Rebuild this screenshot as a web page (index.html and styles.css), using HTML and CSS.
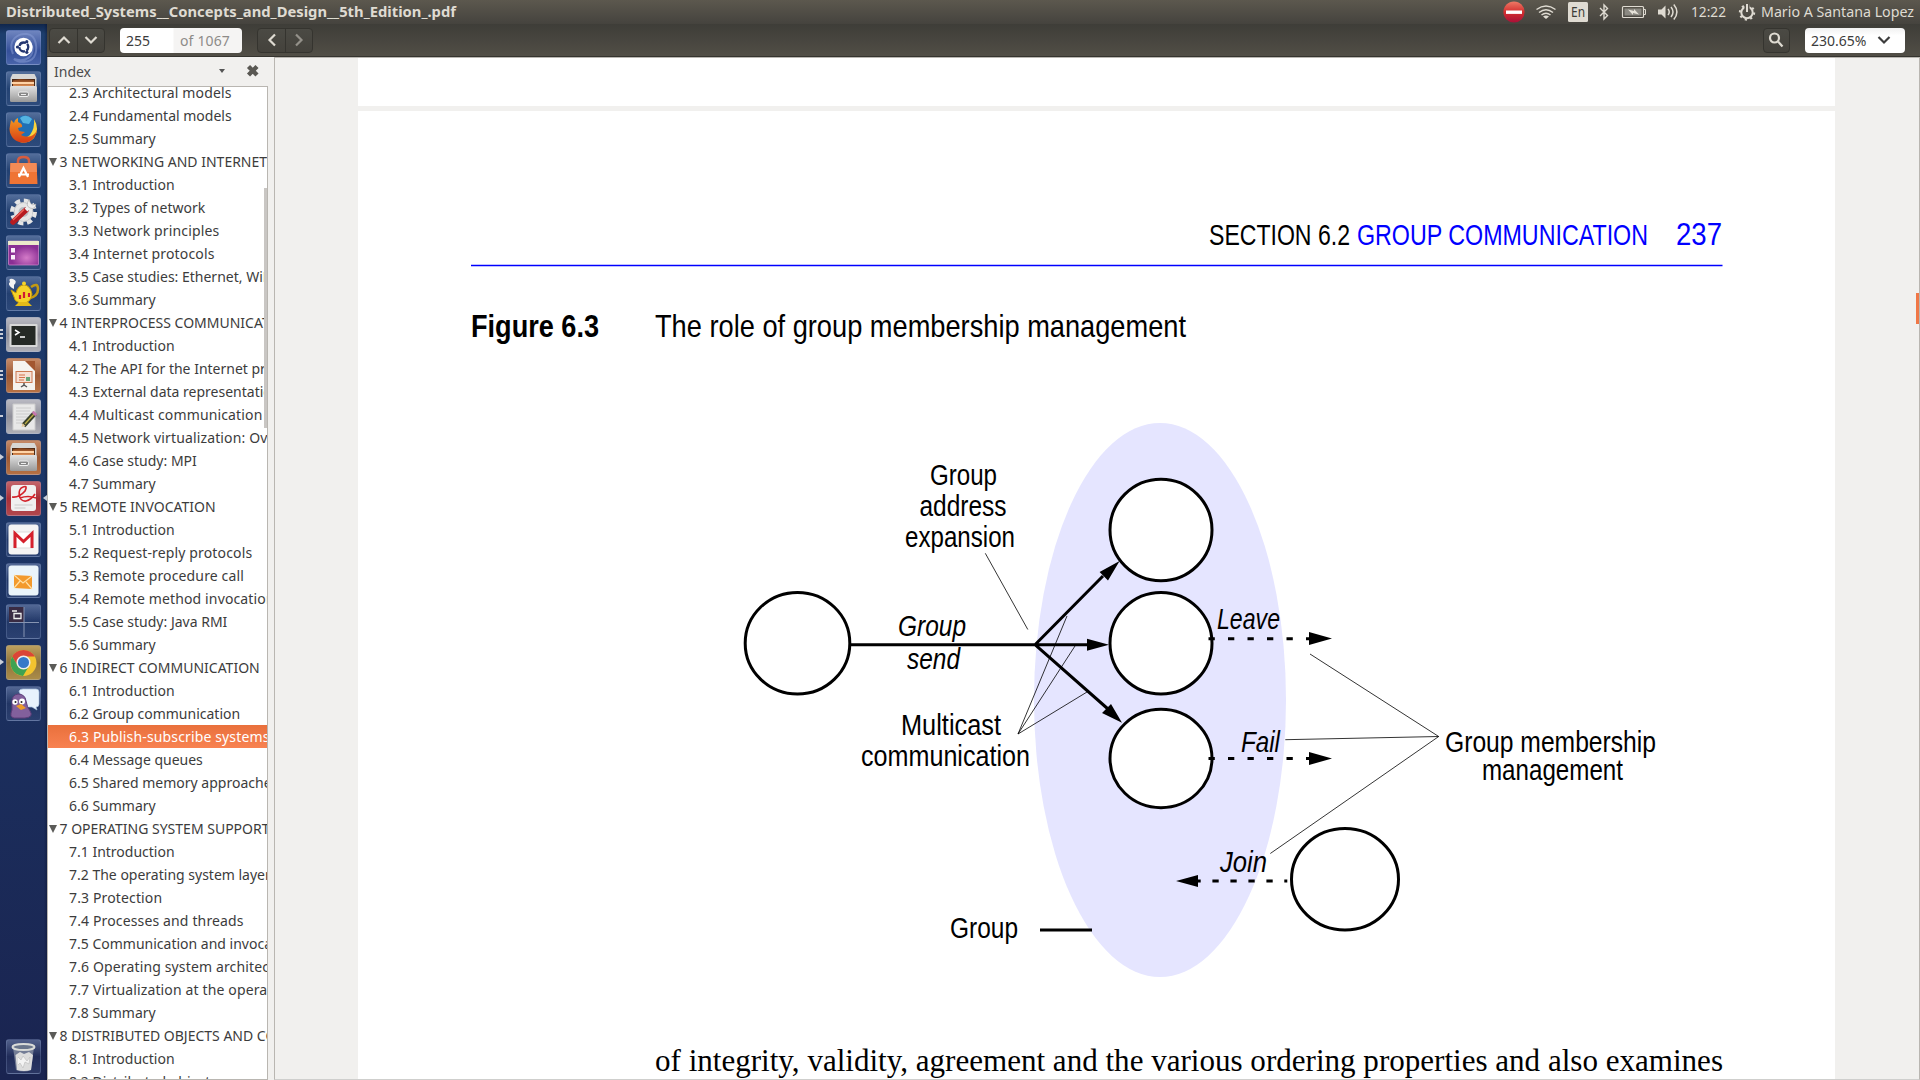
FILE: index.html
```html
<!DOCTYPE html>
<html lang="en">
<head>
<meta charset="utf-8">
<title>Distributed_Systems__Concepts_and_Design__5th_Edition_.pdf</title>
<link rel="stylesheet" href="styles.css">
</head>
<body>
<header class="menubar">
  <svg class="title" width="470" height="24"><text x="6" y="17" textLength="450" lengthAdjust="spacingAndGlyphs">Distributed_Systems__Concepts_and_Design__5th_Edition_.pdf</text></svg>
  <svg class="tray" width="420" height="24" viewBox="1500 0 420 24">
    <defs><linearGradient id="red" x2="0" y2="1"><stop offset="0" stop-color="#ee7a66"/><stop offset=".5" stop-color="#d22f2f"/><stop offset="1" stop-color="#a80f38"/></linearGradient></defs>
    <circle cx="1514" cy="12" r="10.6" fill="url(#red)"/><rect x="1506" y="10.5" width="16" height="3.4" fill="#fff"/>
    <g fill="none" stroke="#dfdbd2" stroke-width="1.5"><path d="M1536.5 9.5Q1546 2.500 1555.500 9.500M1539 12.500Q1546 7 1553 12.500M1541.500 15Q1546 11.500 1550.500 15"/></g><path d="M1543 16.500Q1546 14.500 1549 16.500L1546 19z" fill="#dfdbd2"/>
    <rect x="1568" y="2" width="20" height="20" rx="1.500" fill="#dfdbd2"/><text x="1571" y="17" class="lang" textLength="14" lengthAdjust="spacingAndGlyphs">En</text>
    <path d="M1600 8L1607.500 15.500 1604 19V5L1607.500 8.500 1600 16" fill="none" stroke="#dfdbd2" stroke-width="1.400"/>
    <rect x="1622.500" y="6.500" width="21" height="11" rx="1" fill="none" stroke="#dfdbd2" stroke-width="1.200"/><path d="M1644 9.500h1.500v5h-1.500" fill="none" stroke="#dfdbd2"/><rect x="1624.500" y="8.500" width="17" height="7" fill="#8b8982"/><path d="M1628 9.500l6 1.500v-2l5 5.500-6-1.500v2z" fill="#e6e2d9"/>
    <path d="M1658 9.500h3.500l4-4v13l-4-4h-3.500z" fill="#dfdbd2"/><path d="M1668 9Q1670.500 12 1668 15M1671 7Q1675 12 1671 17M1673.800 4.500Q1680 12 1673.800 19.500" fill="none" stroke="#dfdbd2" stroke-width="1.500"/>
    <text x="1691" y="17" textLength="35" lengthAdjust="spacingAndGlyphs">12:22</text>
    <circle cx="1747" cy="12.500" r="5.700" fill="none" stroke="#dfdbd2" stroke-width="2"/><circle cx="1747" cy="12.500" r="7.200" fill="none" stroke="#dfdbd2" stroke-width="2" stroke-dasharray="2.200 3.455"/><path d="M1744.500 4h5v6h-5z" fill="#54514a"/><path d="M1747 4v8" stroke="#dfdbd2" stroke-width="2"/>
    <text x="1761" y="17" textLength="153" lengthAdjust="spacingAndGlyphs">Mario A Santana Lopez</text>
  </svg>
</header>
<div class="desktop">
<nav class="launcher">
  <svg width="0" height="0" class="defs"><defs>
    <linearGradient id="steel" x2="0" y2="1"><stop offset="0" stop-color="#e2e2e2"/><stop offset="1" stop-color="#999"/></linearGradient>
    <linearGradient id="fold" x2="0" y2="1"><stop offset="0" stop-color="#7b3a14"/><stop offset="1" stop-color="#f6a465"/></linearGradient>
    <radialGradient id="violet" cx=".6" cy=".7"><stop offset="0" stop-color="#d47bc8"/><stop offset="1" stop-color="#8a2f94"/></radialGradient>
    <linearGradient id="fox" x2="0" y2="1"><stop offset="0" stop-color="#f49a22"/><stop offset="1" stop-color="#d63c16"/></linearGradient>
    <symbol id="files" viewBox="0 0 35 35"><path d="M6.500 3h22l2 4v12h-26V7z" fill="#d7d7d5"/><path d="M6 8h23v9H6z" fill="#4a2a18"/><path d="M7 9.500l7-1.500 14 1v8H7z" fill="url(#fold)"/><path d="M6 11h22v2H6z" fill="#ffd3a6"/><rect x="4" y="15" width="27" height="16" rx="1.500" fill="url(#steel)"/><rect x="12.500" y="21" width="10" height="4.500" rx="1.500" fill="#888" stroke="#eee"/><path d="M15 23.500h5" stroke="#eee"/></symbol>
  </defs></svg>
  <div class="tile dash"><svg viewBox="0 0 35 35"><path d="M7 24C1 10 12 3 21 4 31 5 32 20 28 27 24 33 12 33 8 29 20 33 29 26 26 15" fill="none" stroke="#8ba0d8" stroke-width="2" opacity=".5"/><circle cx="17.500" cy="17" r="9.200" fill="#fff"/><circle cx="17.800" cy="17" r="4.500" fill="none" stroke="#23356f" stroke-width="2.300" stroke-dasharray="8.200 1.200" stroke-dashoffset="4"/><g fill="#23356f"><circle cx="11.500" cy="17" r="1.600"/><circle cx="20.800" cy="11.700" r="1.600"/><circle cx="20.800" cy="22.300" r="1.600"/></g></svg></div>
  <div class="tile"><svg viewBox="0 0 35 35"><use href="#files"/></svg></div>
  <div class="tile"><svg viewBox="0 0 35 35"><circle cx="18" cy="16" r="12.500" fill="#2070b5"/><path d="M14 6Q20 1 26 7L23 12 17 11z" fill="#54b4e1"/><path d="M28 7Q34 17 28 26 22 32 14 30L24 23Q29 16 28 7z" fill="#fbd33b"/><path d="M5 8Q4 13 3.500 17C4 34 29 36 31 18 28 25 21 26 15 23l4-3-6-1-1-3 4-1Q17 12 12 10L12 6Q9 7 8 11z" fill="url(#fox)"/></svg></div>
  <div class="tile"><svg viewBox="0 0 35 35"><path d="M12 13V8Q12 4 17.500 4T23 8v5" fill="none" stroke="#d75c3e" stroke-width="2.500"/><path d="M4.500 10h26l1 21h-28z" fill="#ef7434"/><path d="M4.500 10h26l.5 9H4z" fill="#f38b56"/><path d="M13 24l4.500-9 4.500 9M12 21.500h11" fill="none" stroke="#fff" stroke-width="2.200"/></svg></div>
  <div class="tile"><svg viewBox="0 0 35 35"><circle cx="17.500" cy="18" r="9.500" fill="#e5e5e5" stroke="#c8c8c8"/><circle cx="17.500" cy="18" r="11.500" fill="none" stroke="#e5e5e5" stroke-width="4" stroke-dasharray="5.300 3.730"/><circle cx="17.500" cy="18" r="5" fill="#b9bcc2"/><path d="M7 28L20 16" stroke="#b61b20" stroke-width="5.500" stroke-linecap="round"/><path d="M7 26L18 15.500" stroke="#ee6258" stroke-width="1.500"/><path d="M20 16l5-5" stroke="#eee" stroke-width="4"/><path d="M23 5.500Q19 12 24 14T30 10L26.500 11 24.500 9z" fill="#eee" stroke="#999" stroke-width=".5"/></svg></div>
  <div class="tile"><svg viewBox="0 0 35 35"><rect x="2.500" y="6" width="30" height="24" rx="1" fill="url(#violet)" stroke="#d58bd0" stroke-width=".7"/><rect x="2" y="6" width="31" height="4" fill="#eceacb"/><path d="M5 13h4v4.500H5zM5 20h4v4.500H5z" fill="#fbeefa"/></svg></div>
  <div class="tile"><svg viewBox="0 0 35 35"><path d="M6 12Q1 8 4 6 2 2 7 3 12 5 8 9L8 13z" fill="#f3f3f3"/><path d="M25 11Q32 6 32 13T24 22" fill="none" stroke="#c39a12" stroke-width="2.500"/><path d="M5 14l5 3Q12 9 18 9t8 9q-1 9-9 9-8 0-9-6z" fill="#f5d32a" stroke="#c3980b"/><path d="M13 26h9l4 4H9z" fill="#e3bb19"/><circle cx="18" cy="7.500" r="2" fill="#f5d32a"/><path d="M14 19v4M18 16v6M23 17v4" stroke="#cf1b33" stroke-width="2.200"/></svg></div>
  <div class="tile grey run3"><svg viewBox="0 0 35 35"><rect x="3.500" y="7" width="28" height="23" rx="1" fill="#d8d8d8"/><rect x="5.500" y="9" width="24" height="19" fill="#252925"/><path d="M9 13l4 2.500-4 2.500M14 20h5" fill="none" stroke="#fff" stroke-width="1.500"/></svg></div>
  <div class="tile brown run3"><svg viewBox="0 0 35 35"><path d="M7 3h14l8 8v21H7z" fill="#f5f3ef"/><path d="M19 3h10v10z" fill="#a35730"/><rect x="10" y="13.500" width="16" height="11" fill="#f7e0d4" stroke="#cb7952"/><path d="M13 17h6M13 19.500h6M13 22h5" stroke="#d2724b"/><rect x="20" y="19" width="4" height="4" fill="#66a579"/><path d="M18 25v2l-3 2M18 27l3 2" fill="none" stroke="#555" stroke-width="1.500"/></svg></div>
  <div class="tile grey run2"><svg viewBox="0 0 35 35"><path d="M7 5h22v26H7z" fill="#e8e8e8" stroke="#ccc"/><path d="M10 9h15M10 12h14M10 15h15M10 18h12M10 21h9M10 24h8" stroke="#ccc"/><path d="M17.500 26.500L29 14" stroke="#39402c" stroke-width="5"/><path d="M19 25L28 15" stroke="#bcae45" stroke-width="1.300"/><path d="M27.500 15.500l2-2" stroke="#c678ae" stroke-width="5"/><path d="M15.500 28l1-4 3 3z" fill="#e4ca9a"/></svg></div>
  <div class="tile brown run1"><svg viewBox="0 0 35 35"><use href="#files"/></svg></div>
  <div class="tile redt run1 focus"><svg viewBox="0 0 35 35"><rect x="5" y="4" width="25" height="26" rx="3" fill="#f0f0f0"/><path d="M6 16Q13 17 19 10 22 4 17 6C11 8 12 21 20 20Q25 19 29 13M14 17Q22 14 30 17" fill="none" stroke="#d3232b" stroke-width="1.700"/><path d="M8.500 24h18M8.500 27h11" stroke="#d6d6d6" stroke-width="1.500"/></svg></div>
  <div class="tile"><svg viewBox="0 0 35 35"><rect x="2.500" y="2.500" width="30" height="30" rx="3" fill="#f4f4f4"/><path d="M8 10h19v16H8z" fill="#fff" stroke="#ddd"/><path d="M9 26V11.500l8.500 8 8.500-8V26" fill="none" stroke="#d5202c" stroke-width="3"/></svg></div>
  <div class="tile"><svg viewBox="0 0 35 35"><rect x="2.500" y="2.500" width="30" height="30" rx="3" fill="#eaf4fa"/><path d="M8 12l18 1v13l-18-1z" fill="#f39a2d"/><path d="M8 12l9 8 9-7M8 25l6-7M26 26l-6-7" fill="none" stroke="#ffe0a6" stroke-width="1.200"/></svg></div>
  <div class="tile"><svg viewBox="0 0 35 35"><path d="M3 3h15v15H3z" fill="#392b43"/><path d="M18 3v30M3 18.500h30" stroke="#8694b2"/><path d="M6 7h5M8 9.500h7v5H8z" fill="none" stroke="#eee" stroke-width="1.300"/></svg></div>
  <div class="tile gold run1"><svg viewBox="0 0 35 35"><circle cx="17.500" cy="18" r="13" fill="#f2c42f"/><path d="M6.200 11.500A13 13 0 0 1 28.800 11.500H17.500L12 21z" fill="#db4537"/><path d="M6.200 11.500A13 13 0 0 0 17 31L23 21H12z" fill="#3fa252"/><circle cx="17.500" cy="17.500" r="6.300" fill="#3679c9" stroke="#eee" stroke-width="1.500"/></svg></div>
  <div class="tile"><svg viewBox="0 0 35 35"><path d="M13 5Q14 3 17 3h13q3 0 3 3v12q0 3-3 3l1 3-5-3h-7z" fill="#e8f2fc" stroke="#a9c3df" stroke-width=".7"/><path d="M8 32Q3 31 6 24V15Q6 9 12 8q7 0 8 7 1 6 4 10 4 6-5 7z" fill="#82609c" stroke="#5c3d78"/><circle cx="9" cy="16" r="2.700" fill="#fff"/><circle cx="16" cy="15.500" r="3" fill="#fff"/><circle cx="9.500" cy="16" r="1" fill="#222"/><circle cx="15.500" cy="16" r="1" fill="#222"/><path d="M10 20l5-2 5 4-5 2z" fill="#ed9c29"/></svg></div>
  <div class="tile trash"><svg viewBox="0 0 35 35"><path d="M7 8l3 23q8 3 15 0l3-23z" fill="#8b93a5" opacity=".75"/><path d="M9.500 16l4.500-3 4 2 5-2 4 3-2 15q-7 2-14 0z" fill="#dcdcdc"/><path d="M12 18l3 3 2-4 4 5 3-4-1 7-4-2-2 6-3-5-2 2" fill="#f3f3f3" stroke="#bbb" stroke-width=".6"/><ellipse cx="17.500" cy="8" rx="11" ry="3" fill="#69758b" stroke="#d9dbd8" stroke-width="2"/></svg></div>
</nav>
<main class="window">
  <div class="toolbar">
    <div class="group"><span class="btn"><svg width="14" height="10"><path d="M1.500 8L7 2.500 12.500 8"/></svg></span><span class="btn"><svg width="14" height="10"><path d="M1.500 2L7 7.500 12.500 2"/></svg></span></div>
    <div class="pager"><span class="num">255</span><span class="of">of 1067</span></div>
    <div class="group"><span class="btn"><svg width="10" height="14"><path d="M8 1.500L2.500 7 8 12.500"/></svg></span><span class="btn off"><svg width="10" height="14"><path d="M2 1.500L7.500 7 2 12.500"/></svg></span></div>
    <div class="spacer"></div>
    <div class="group find"><span class="btn"><svg width="16" height="16"><circle cx="6.500" cy="6" r="4.500"/><path d="M10 9.500l4.500 5" stroke-width="3"/></svg></span></div>
    <div class="zoom"><span>230.65%</span><svg width="14" height="10"><path d="M1.500 2L7 7.500 12.500 2"/></svg></div>
  </div>
  <div class="body">
    <aside class="side">
      <div class="sidehead"><span>Index</span><i class="caret"></i><svg width="14" height="14"><path d="M2.500 2.500l8.500 8.500M11 2.500L2.500 11" stroke="#5a5853" stroke-width="4.400"/></svg></div>
      <div class="tree">
        <ul class="list">
          <li class="w">2.3 Architectural models</li><li>2.4 Fundamental models</li><li>2.5 Summary</li>
          <li class="ch">3 NETWORKING AND INTERNETWORKING</li><li>3.1 Introduction</li><li>3.2 Types of network</li><li class="w">3.3 Network principles</li><li class="w">3.4 Internet protocols</li><li>3.5 Case studies: Ethernet, WiFi</li><li>3.6 Summary</li>
          <li class="ch">4 INTERPROCESS COMMUNICATION</li><li>4.1 Introduction</li><li>4.2 The API for the Internet protocols</li><li>4.3 External data representation</li><li class="w">4.4 Multicast communication</li><li class="w">4.5 Network virtualization: Overlay</li><li>4.6 Case study: MPI</li><li>4.7 Summary</li>
          <li class="ch">5 REMOTE INVOCATION</li><li>5.1 Introduction</li><li class="w">5.2 Request-reply protocols</li><li class="w">5.3 Remote procedure call</li><li class="w">5.4 Remote method invocation</li><li>5.5 Case study: Java RMI</li><li>5.6 Summary</li>
          <li class="ch">6 INDIRECT COMMUNICATION</li><li>6.1 Introduction</li><li>6.2 Group communication</li><li class="on">6.3 Publish-subscribe systems</li><li>6.4 Message queues</li><li>6.5 Shared memory approaches</li><li>6.6 Summary</li>
          <li class="ch">7 OPERATING SYSTEM SUPPORT</li><li>7.1 Introduction</li><li>7.2 The operating system layer</li><li class="w">7.3 Protection</li><li class="w">7.4 Processes and threads</li><li>7.5 Communication and invocation</li><li class="w">7.6 Operating system architecture</li><li class="w">7.7 Virtualization at the operating</li><li>7.8 Summary</li>
          <li class="ch">8 DISTRIBUTED OBJECTS AND COMPONENTS</li><li>8.1 Introduction</li><li>8.2 Distributed objects</li>
        </ul>
        <i class="thumb"></i>
      </div>
    </aside>
    <section class="doc">
      <div class="prev"></div>
      <article class="page">
        <svg class="sans" width="1477" height="179" viewBox="358 111 1477 179">
          <text x="1209" y="245" textLength="141" lengthAdjust="spacingAndGlyphs">SECTION 6.2</text>
          <g fill="#00f"><text x="1357" y="245" textLength="291" lengthAdjust="spacingAndGlyphs">GROUP COMMUNICATION</text><text class="folio" x="1676" y="245" textLength="46" lengthAdjust="spacingAndGlyphs">237</text></g>
          <path d="M471 265.500H1722.500" stroke="#00f" stroke-width="1.600"/>
        </svg>
        <svg class="sans" width="1477" height="90" viewBox="358 290 1477 90">
          <text class="cap fig" x="471" y="336.500" textLength="128" lengthAdjust="spacingAndGlyphs">Figure 6.3</text>
          <text class="cap" x="655" y="336.500" textLength="531" lengthAdjust="spacingAndGlyphs">The role of group membership management</text>
        </svg>
        <svg class="sans" width="1477" height="640" viewBox="358 380 1477 640">
          <ellipse cx="1160" cy="700" rx="126" ry="277" fill="#e5e5ff"/>
          <g fill="#fff" stroke="#000" stroke-width="3">
            <ellipse cx="797.500" cy="643.200" rx="52.300" ry="50.800"/><ellipse cx="1161" cy="530" rx="51" ry="50.800"/><ellipse cx="1161" cy="643.200" rx="51" ry="50.800"/><ellipse cx="1161" cy="758.500" rx="51" ry="49.200"/><ellipse cx="1345" cy="879.300" rx="53.500" ry="50.700"/>
          </g>
          <g fill="none" stroke="#000" stroke-width="3">
            <path d="M850 644.700H1090M1035 644.700L1103 576M1035 644.700L1108 709M1040 930H1092"/>
            <path d="M1208.500 638.700H1310M1208.500 758.400H1310" stroke-dasharray="6.300 13.200"/>
            <path d="M1287.300 881h-3M1272.700 881H1197" stroke-dasharray="6.300 11.700"/>
          </g>
          <path d="M1087 638.700l22 6-22 6zM1119.600 561L1099.600 572 1108 580.500zM1122 722.700L1111 704 1102 713zM1309 632l23 6.500-23 6.500zM1309 752l23 6.500-23 6.500zM1198 875l-22 6 22 6z"/>
          <path d="M985.300 553.300L1027.800 629.500M1067 616L1018 734 1075 646M1018 734L1087 692M1310 654L1438.700 736.500 1285.300 739.700M1438.700 736.500L1270.300 853.500" fill="none" stroke="#000" stroke-width=".8"/>
          <text x="930" y="485.300" textLength="67" lengthAdjust="spacingAndGlyphs">Group</text>
          <text x="919.500" y="516" textLength="87" lengthAdjust="spacingAndGlyphs">address</text>
          <text x="905" y="547" textLength="110" lengthAdjust="spacingAndGlyphs">expansion</text>
          <text x="901" y="735" textLength="100" lengthAdjust="spacingAndGlyphs">Multicast</text>
          <text x="861" y="766" textLength="169" lengthAdjust="spacingAndGlyphs">communication</text>
          <text x="1445" y="752" textLength="211" lengthAdjust="spacingAndGlyphs">Group membership</text>
          <text x="1482" y="780" textLength="141" lengthAdjust="spacingAndGlyphs">management</text>
          <text x="950" y="938" textLength="68" lengthAdjust="spacingAndGlyphs">Group</text>
          <g font-style="italic">
            <text x="898" y="636" textLength="68" lengthAdjust="spacingAndGlyphs">Group</text>
            <text x="907" y="669" textLength="53" lengthAdjust="spacingAndGlyphs">send</text>
            <text x="1217" y="629" textLength="63" lengthAdjust="spacingAndGlyphs">Leave</text>
            <text x="1241" y="752" textLength="39" lengthAdjust="spacingAndGlyphs">Fail</text>
            <text x="1220" y="872" textLength="47" lengthAdjust="spacingAndGlyphs">Join</text>
          </g>
        </svg>
        <svg class="serif" width="1477" height="59" viewBox="358 1020 1477 59"><text x="655" y="1071" textLength="1068" lengthAdjust="spacingAndGlyphs">of integrity, validity, agreement and the various ordering properties and also examines</text></svg>
      </article>
      <i class="docthumb"></i>
    </section>
  </div>
</main>
</div>
</body>
</html>
```
FILE: styles.css
```css
* { box-sizing: border-box; }
body { margin: 0; width: 1920px; height: 1080px; overflow: hidden; display: flex; flex-direction: column; font: 14px "Noto Sans", "Open Sans", sans-serif; color: #3c3c3c; }
svg { display: block; flex: none; }
.menubar { height: 24px; display: flex; justify-content: space-between; background: linear-gradient(#5c584e, #45433e); }
.menubar text { font-size: 14px; fill: #dfdbd2; }
.title text { font-weight: bold; }
.menubar .lang { fill: #3c3b37; font-size: 14.5px; }
.desktop { flex: 1; min-height: 0; display: flex; }

.launcher { width: 47px; display: flex; flex-direction: column; gap: 6px; padding: 6px 0 6px 6px; background: linear-gradient(90deg, transparent 44px, rgba(10, 15, 40, .4)), linear-gradient(#10264c, #1d3e6e 10px, #1c3768 40%, #1a2450); }
.defs { position: absolute; }
.tile { position: relative; flex: none; width: 35px; height: 35px; border-radius: 3px; border: 1px solid rgba(150, 170, 210, .25); background: linear-gradient(rgba(160, 180, 220, .42), rgba(120, 140, 190, .08) 50%, rgba(120, 140, 190, .18)); }
.tile svg { width: 35px; height: 35px; margin: -1px; }
.dash { background: linear-gradient(#6f85bf, #35509a 60%, #4863a9); }
.grey { background: linear-gradient(#b9b9c2, #8f8f99 50%, #aeaeb5); }
.brown { background: linear-gradient(#c68a67, #9c5935 50%, #b57043); }
.redt { background: linear-gradient(#c3646a, #a92f38 50%, #b2474d); }
.gold { background: linear-gradient(#bda05e, #8f743c 50%, #ab8c49); }
.trash { margin-top: auto; }
.run1::before, .run2::before, .run3::before { content: ""; position: absolute; left: -7px; top: 13px; border: solid transparent; border-width: 3.500px 0 3.500px 4px; border-left-color: #c9ced9; }
.run2::before, .run3::before { top: 15px; width: 3px; height: 2px; border: 0; background: #c9ced9; }
.run3::before { box-shadow: 0 -4px #c9ced9, 0 4px #c9ced9; }
.focus::after { content: ""; position: absolute; right: -7px; top: 13px; border: solid transparent; border-width: 3.500px 4px 3.500px 0; border-right-color: #c9ced9; }

.window { flex: 1; min-width: 0; display: flex; flex-direction: column; }
.toolbar { height: 33px; display: flex; align-items: flex-start; padding: 4px 15px 0 2px; background: linear-gradient(#3e3d38, #514e46); border-bottom: 1px solid #35342f; }
.toolbar path, .toolbar circle { fill: none; stroke: #dfdbd2; stroke-width: 2.200; }
.group { display: flex; height: 25px; margin-right: 15px; border: 1px solid #35342f; border-radius: 4px; background: linear-gradient(#4b4a44, #44423c); }
.btn { width: 27px; display: flex; align-items: center; justify-content: center; padding-bottom: 1px; }
.btn + .btn { border-left: 1px solid #35342f; }
.toolbar .off path { stroke: #94918a; }
.pager, .zoom { height: 25px; display: flex; align-items: center; border-radius: 4px; background: linear-gradient(#f1f1f1, #fff 30%); color: #3c3c3c; }
.pager { width: 122px; margin-right: 15px; padding-left: 6px; background: linear-gradient(90deg, #fff 53px, #f5f4f3 54px); }
.num { width: 54px; }
.of { color: #8d8b88; letter-spacing: .15px; }
.spacer { flex: 1; }
.find { width: 27px; }
.find .btn { width: 25px; padding-right: 2px; }
.zoom { width: 100px; padding-left: 6px; gap: 11px; }
.zoom svg { margin-bottom: 1px; }
.toolbar .zoom path { stroke: #3c3c3c; }

.body { flex: 1; min-height: 0; display: flex; background: #f1f0ee; }
.side { width: 227px; padding-right: 6px; display: flex; flex-direction: column; border-left: 1px solid #b9b6b1; }
.sidehead { height: 29px; flex: none; display: flex; align-items: center; padding: 0 8px 1px 6px; color: #4c4c4c; }
.caret { margin-left: auto; margin-right: 21px; border: solid transparent; border-width: 4px 3px 0; border-top-color: #555; }
.tree { position: relative; flex: 1; min-height: 0; overflow: hidden; background: #fff; border: solid #b9b6b1; border-width: 1px 1px 1px 0; }
.list { list-style: none; margin: -6px 0 0; padding: 0; }
.list li { height: 23px; line-height: 23px; padding-left: 21px; white-space: nowrap; overflow: hidden; }
.list .w, .list .on { letter-spacing: .14px; }
.list .ch { padding-left: 0; display: flex; align-items: center; }
.ch::before { content: ""; flex: none; margin: 0 3px 0 .5px; border: solid transparent; border-width: 8px 4.500px 0; border-top-color: #5b5b58; }
.list .on { color: #fff; background: linear-gradient(#e9703c, #f88251); }
.thumb { position: absolute; right: 0; top: 101px; width: 3px; height: 240px; background: #c9c6c3; }
.doc { position: relative; flex: 1; min-width: 0; overflow: hidden; border: 1px solid #b9b6b1; border-bottom-color: #cfcfcd; padding-left: 83px; }
.prev { width: 1477px; height: 48px; background: #fff; margin-bottom: 5px; }
.page { width: 1477px; background: #fff; display: flex; flex-direction: column; }
.sans { font-family: "Liberation Sans Narrow", "Liberation Sans", sans-serif; font-size: 29.500px; }
.folio { font-size: 32px; }
.cap { font-size: 30.500px; }
.fig { font-weight: bold; }
.serif { font-family: "Liberation Serif", serif; font-size: 31px; }
.docthumb { position: absolute; right: 0; top: 235px; width: 3px; height: 31px; background: #f07746; }
```
